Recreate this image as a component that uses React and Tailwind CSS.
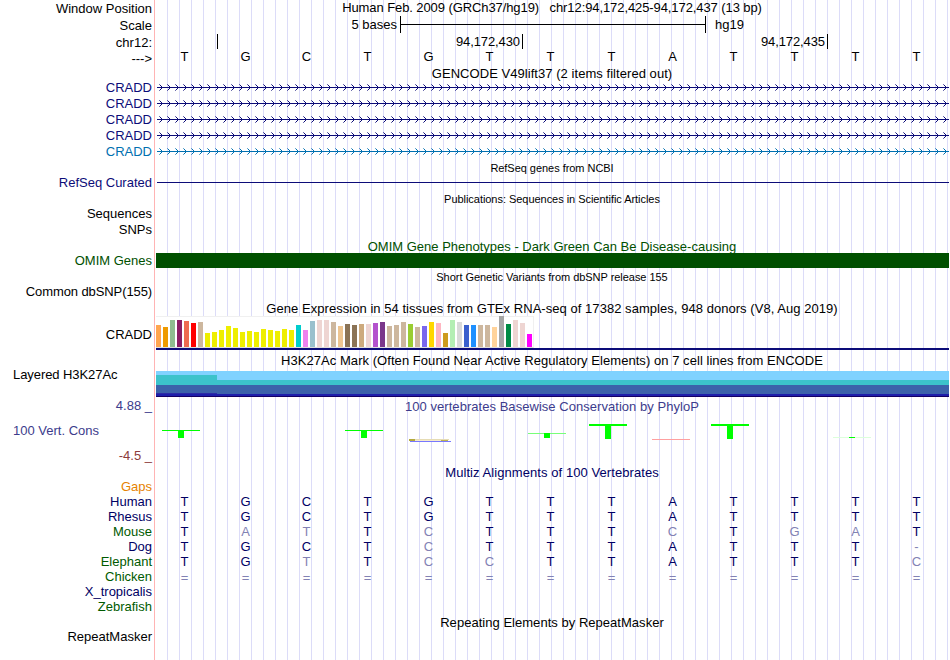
import React from 'react';
import clsx from 'clsx';

const HUMAN = 'TGCTGTTTATTTT';

const ALIGNMENTS = [
  { name: 'Human', seq: HUMAN, color: 'text-[#000064]' },
  { name: 'Rhesus', seq: 'TGCTGTTTATTTT', color: 'text-[#000064]' },
  { name: 'Mouse', seq: 'TATTCTTTCTGAT', color: 'text-[#005a00]' },
  { name: 'Dog', seq: 'TGCTCTTTATTT-', color: 'text-[#000064]' },
  { name: 'Elephant', seq: 'TGTTCCTTATTTC', color: 'text-[#005a00]' },
  { name: 'Chicken', seq: '=============', color: 'text-[#005a00]' },
  { name: 'X_tropicalis', seq: '', color: 'text-[#000064]' },
  { name: 'Zebrafish', seq: '', color: 'text-[#005a00]' },
];

// [color, height] for each GTEx tissue
const TISSUES = [
  ['#ffa54f', 22], ['#ee9a00', 20], ['#8fbc8f', 27], ['#8b1c62', 27], ['#ee6a50', 26],
  ['#ff0000', 24], ['#cdb79e', 25], ['#eeee00', 14], ['#eeee00', 15], ['#eeee00', 17],
  ['#eeee00', 21], ['#eeee00', 19], ['#eeee00', 15], ['#eeee00', 16], ['#eeee00', 15],
  ['#eeee00', 18], ['#eeee00', 17], ['#eeee00', 16], ['#eeee00', 18], ['#eeee00', 17],
  ['#00cdcd', 22], ['#ee82ee', 17], ['#9ac0cd', 26], ['#eed5d2', 27], ['#eed5d2', 27],
  ['#cdb79e', 25], ['#eec591', 21], ['#8b7355', 23], ['#8b7355', 22], ['#cdaa7d', 23],
  ['#eed5d2', 23], ['#b452cd', 24], ['#7a378b', 25], ['#cdb79e', 21], ['#cdb79e', 22],
  ['#cdb79e', 25], ['#9acd32', 23], ['#cdb79e', 20], ['#7a67ee', 21], ['#ffd700', 25],
  ['#ffb6c1', 24], ['#cd9b1d', 14], ['#b4eeb4', 27], ['#d9d9d9', 25], ['#3a5fcd', 22],
  ['#1e90ff', 22], ['#cdb79e', 22], ['#cdb79e', 22], ['#ffd39b', 20], ['#a6a6a6', 31],
  ['#008b45', 23], ['#eed5d2', 27], ['#eed5d2', 24], ['#ff00ff', 13],
];

function Row({ label, labelClass, className, children }) {
  return (
    <div className={clsx('flex', className)}>
      <div className={clsx('w-[152px] shrink-0 text-right', labelClass)}>{label}</div>
      <div className="ml-[3px] w-[794px] shrink-0">{children}</div>
    </div>
  );
}

function Title({ small, className, children }) {
  return (
    <div className={clsx('text-center whitespace-pre', small && 'text-[11px] leading-4 tracking-[-0.04px]', className)}>
      {children}
    </div>
  );
}

function Bases({ seq, compare }) {
  return (
    <div className="-ml-px grid w-[793px] grid-cols-13 text-center">
      {seq.split('').map((base, i) => (
        <span
          key={i}
          className={clsx(
            compare && (base === compare[i] ? 'text-[#000064]' : 'text-[#8282b4]'),
            base === '=' && 'pt-px'
          )}
        >
          {base}
        </span>
      ))}
    </div>
  );
}

// Intron line with strand arrows
function Intron({ color }) {
  const arrows = [];
  for (let x = 4; x < 794; x += 8) arrows.push(x);
  return (
    <svg width="794" height="16" shapeRendering="crispEdges" fill={color}>
      <rect x="2" y="7" width="792" height="1" />
      {arrows.map((x) => (
        <g key={x}>
          <rect x={x} y="4" width="1" height="1" opacity="0.6" />
          <rect x={x + 1} y="5" width="1" height="1" />
          <rect x={x + 2} y="6" width="1" height="1" />
          <rect x={x + 2} y="8" width="1" height="1" />
          <rect x={x + 1} y="9" width="1" height="1" />
          <rect x={x} y="10" width="1" height="1" opacity="0.6" />
        </g>
      ))}
    </svg>
  );
}

function GeneExpression() {
  return (
    <div className="pl-px">
      <div className="flex h-8 w-[378px] items-end gap-0.5 border-t border-r border-b border-t-[#f0f0f0] border-r-[#f0f0f0] border-b-[#dcdcdc] bg-white">
        {TISSUES.map(([color, height], i) => (
          <div key={i} className="w-[5px] shrink-0" style={{ backgroundColor: color, height }} />
        ))}
      </div>
      <div className="h-0.5 bg-[#0c0c78]" />
    </div>
  );
}

function LayeredMarks() {
  return (
    <svg width="794" height="27" shapeRendering="crispEdges">
      <rect x="1" y="0" width="793" height="26" fill="#80d2ff" />
      <rect x="1" y="9" width="793" height="17" fill="#3cc3cb" />
      <rect x="1" y="4" width="61" height="10" fill="#3cc3cb" />
      <rect x="1" y="14" width="793" height="10" fill="#3c62aa" />
      <rect x="1" y="22" width="61" height="2" fill="#2c2ca5" />
      <rect x="1" y="23" width="793" height="2" fill="#1e1eaa" />
      <rect x="1" y="25" width="793" height="1" fill="#140064" />
    </svg>
  );
}

function Conservation() {
  return (
    <svg width="794" height="51" shapeRendering="crispEdges" fill="#00ff00">
      <rect x="7" y="16" width="38" height="1" />
      <rect x="23" y="16" width="6" height="8" />
      <rect x="190" y="16" width="38" height="1" />
      <rect x="206" y="16" width="6" height="8" />
      <rect x="254" y="25" width="40" height="1" fill="#e6dcb4" />
      <rect x="254" y="25" width="6" height="2" fill="#b4aa3c" />
      <rect x="260" y="26" width="26" height="1" fill="#f5ebcd" />
      <rect x="286" y="26" width="7" height="1" fill="#beb450" />
      <rect x="255" y="27" width="41" height="1" fill="#7878ff" />
      <rect x="373" y="19" width="38" height="1" fill="#78ff78" />
      <rect x="389" y="19" width="6" height="5" />
      <rect x="434" y="10" width="38" height="2" />
      <rect x="450" y="10" width="6" height="15" />
      <rect x="497" y="25" width="38" height="1" fill="#ffa0a0" />
      <rect x="556" y="10" width="38" height="2" />
      <rect x="572" y="10" width="6" height="15" />
      <rect x="678" y="23" width="38" height="1" fill="#dcffdc" />
      <rect x="694" y="23" width="6" height="1" />
    </svg>
  );
}

export default function App() {
  return (
    <div className="grid h-[660px] w-[950px] overflow-hidden bg-white font-['Liberation_Sans',Arial,sans-serif] text-[13px] leading-[15px] text-black">
      {/* guide lines */}
      <div className="col-start-1 row-start-1 ml-[154px] flex w-[795px]">
        <div className="w-px bg-[#ffb4b4]" />
        <div className="ml-px flex-1 bg-[linear-gradient(to_right,transparent_11px,#dcdcf8_11px)] bg-[length:12px_100%]" />
      </div>

      <div className="col-start-1 row-start-1">
        <Row className="h-[17px]" label="Window Position" labelClass="leading-[17px]">
          <Title className="tracking-[-0.09px]">
            {'Human Feb. 2009 (GRCh37/hg19)   chr12:94,172,425-94,172,437 (13 bp)'}
          </Title>
        </Row>
        <Row className="h-[17px]" label="Scale" labelClass="leading-[17px]">
          <div className="flex">
            <span className="w-[242px] text-right">5 bases</span>
            <div className="-mt-px ml-[3px] flex h-[17px] w-[306px] items-center border-x border-black">
              <div className="h-px flex-1 bg-black" />
            </div>
            <span className="ml-[9px]">hg19</span>
          </div>
        </Row>
        <Row className="h-[15px]" label="chr12:" labelClass="leading-[17px]">
          <div className="flex text-right tracking-[-0.1px]">
            <div className="h-[15px] w-[63px] border-r border-black" />
            <div className="h-[15px] w-[305px] border-r border-black pr-0.5">94,172,430</div>
            <div className="h-[15px] w-[305px] border-r border-black pr-0.5">94,172,435</div>
          </div>
        </Row>
        <Row className="h-[17px]" label="--->" labelClass="leading-[19px]">
          <Bases seq={HUMAN} />
        </Row>

        <Row className="h-3.5">
          <Title className="tracking-[0.05px]">GENCODE V49lift37 (2 items filtered out)</Title>
        </Row>
        {[1, 2, 3, 4].map((n) => (
          <Row key={n} className="h-4" label="CRADD" labelClass="text-[#0c0c78]">
            <Intron color="#0c0c78" />
          </Row>
        ))}
        <Row className="h-4" label="CRADD" labelClass="text-[#0070b0]">
          <Intron color="#0070b0" />
        </Row>

        <Row className="h-[15px]">
          <Title small>RefSeq genes from NCBI</Title>
        </Row>
        <Row className="h-4" label="RefSeq Curated" labelClass="text-[#0c0c78]">
          <div className="mt-[7px] ml-0.5 h-px bg-[#0c0c78]" />
        </Row>

        <Row className="h-[15px]">
          <Title small>Publications: Sequences in Scientific Articles</Title>
        </Row>
        <Row className="h-4" label="Sequences" />
        <Row className="h-[17px]" label="SNPs" />

        <Row className="h-3.5">
          <Title className="text-[#005000]">OMIM Gene Phenotypes - Dark Green Can Be Disease-causing</Title>
        </Row>
        <Row className="h-4" label="OMIM Genes" labelClass="text-[#005000]">
          <div className="ml-px h-[15px] bg-[#005000]" />
        </Row>

        <Row className="h-[15px]">
          <Title small>Short Genetic Variants from dbSNP release 155</Title>
        </Row>
        <Row className="h-[17px]" label="Common dbSNP(155)" labelClass="tracking-[-0.1px]" />

        <Row className="h-[15px]">
          <Title className="tracking-[0.045px]">
            Gene Expression in 54 tissues from GTEx RNA-seq of 17382 samples, 948 donors (V8, Aug 2019)
          </Title>
        </Row>
        <Row className="h-[37px]" label="CRADD" labelClass="pt-[11px]">
          <GeneExpression />
        </Row>

        <Row className="h-[18px]">
          <Title className="tracking-[0.05px]">
            H3K27Ac Mark (Often Found Near Active Regulatory Elements) on 7 cell lines from ENCODE
          </Title>
        </Row>
        <Row className="h-7" label="Layered H3K27Ac" labelClass="-mt-1 pl-[13px] text-left! tracking-[-0.07px]">
          <LayeredMarks />
        </Row>

        <Row className="h-[15px]" label="4.88 _" labelClass="-mt-px text-[#3c3c8c]">
          <Title className="text-[#3c3c8c] tracking-[0.04px]">100 vertebrates Basewise Conservation by PhyloP</Title>
        </Row>
        <Row
          className="h-[51px]"
          label={
            <>
              <div className="pt-[9px] pl-[13px] text-left text-[#3c3c8c]">100 Vert. Cons</div>
              <div className="mt-2.5 text-[#8c3c3c]">-4.5 _</div>
            </>
          }
        >
          <Conservation />
        </Row>

        <Row className="h-3.5">
          <Title className="text-[#000064] tracking-[0.07px]">Multiz Alignments of 100 Vertebrates</Title>
        </Row>
        <Row className="h-[15px]" label="Gaps" labelClass="text-[#e68200]" />
        {ALIGNMENTS.map(({ name, seq, color }) => (
          <Row key={name} className="h-[15px]" label={name} labelClass={color}>
            <Bases seq={seq} compare={HUMAN} />
          </Row>
        ))}

        <Row className="mt-px h-3.5">
          <Title className="tracking-[0.03px]">Repeating Elements by RepeatMasker</Title>
        </Row>
        <Row className="h-[31px]" label="RepeatMasker" />
      </div>
    </div>
  );
}
